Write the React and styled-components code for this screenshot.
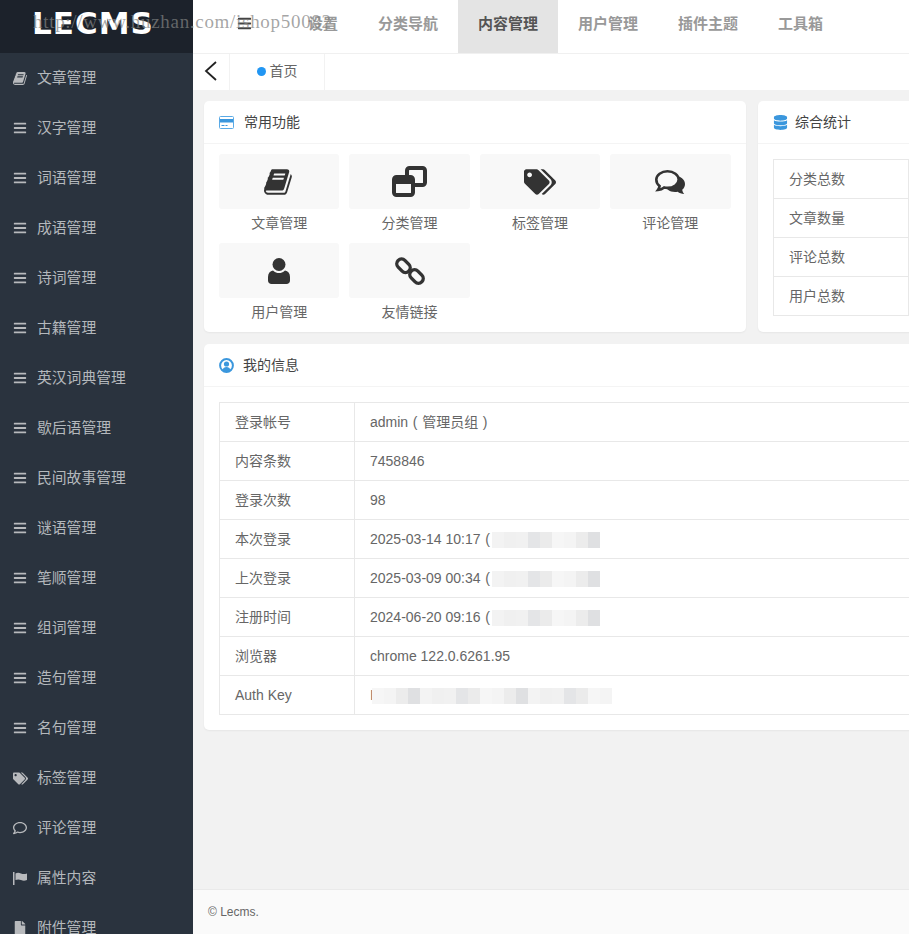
import React from 'react';
import styled, { createGlobalStyle } from 'styled-components';
import {
  FaBars, FaTags, FaRegComment, FaFile, FaDatabase,
} from 'react-icons/fa';

const GlobalStyle = createGlobalStyle`
  html, body { margin: 0; padding: 0; height: 100%; overflow: hidden; }
  body {
    background: #f2f2f2;
    color: #666;
    font-family: "Liberation Sans", "Noto Sans CJK SC", Arial, sans-serif;
    font-size: 14px;
    line-height: 20px;
  }
  #root { height: 100%; }
`;

const Page = styled.div`
  position: relative;
  display: flex;
  width: 909px;
  height: 934px;
  overflow: hidden;
`;
const Sidebar = styled.aside`
  flex: 0 0 193px;
  background: #2a333e;
  overflow: hidden;
`;
const LogoBar = styled.div`
  height: 53px;
  background: #1c222b;
  padding-left: 32px;
  display: flex;
  align-items: center;
`;
const Logo = styled.span`
  color: #fff;
  font-family: "DejaVu Sans", sans-serif;
  font-weight: 700;
  font-size: 31px;
  letter-spacing: 1px;
  line-height: 1;
  margin-top: -6px;
`;
const SideList = styled.ul`
  list-style: none;
  margin: 0;
  padding: 0;
`;
const SideItem = styled.li`
  height: 50px;
  display: flex;
  align-items: center;
  padding-left: 13px;
  color: #b4b8bc;
  font-size: 14.8px;
`;
const SideIcon = styled.span`
  width: 24px;
  display: flex;
  align-items: center;
  font-size: 14px;
  color: #b8babd;
`;
const Main = styled.main`
  flex: 1;
  min-width: 0;
  display: flex;
  flex-direction: column;
`;
const TopBar = styled.header`
  height: 53px;
  background: #fff;
  border-bottom: 1px solid #f0f0f0;
  display: flex;
  align-items: stretch;
  flex-shrink: 0;
`;
const MenuToggle = styled.div`
  width: 95px;
  padding: 0 0 6px 44px;
  box-sizing: border-box;
  display: flex;
  align-items: center;
  color: #444;
  font-size: 15px;
`;
const TopLink = styled.a`
  display: flex;
  align-items: center;
  padding: 0 20px 6px;
  font-size: 15px;
  font-weight: 700;
  color: ${p => (p.$active ? '#555' : '#999')};
  background: ${p => (p.$active ? '#e4e4e4' : 'transparent')};
`;
const TabBar = styled.div`
  height: 36px;
  background: #fff;
  display: flex;
  flex-shrink: 0;
`;
const BackButton = styled.div`
  width: 37px;
  padding-bottom: 2px;
  box-sizing: border-box;
  border-right: 1px solid #f2f2f2;
  display: flex;
  align-items: center;
  justify-content: center;
`;
const Tab = styled.div`
  width: 95px;
  padding-bottom: 2px;
  box-sizing: border-box;
  border-right: 1px solid #f2f2f2;
  display: flex;
  align-items: center;
  justify-content: center;
  gap: 4px;
  color: #666;
  font-size: 14px;
`;
const Dot = styled.i`
  width: 9px;
  height: 9px;
  border-radius: 50%;
  background: #2196f3;
`;
const Content = styled.div`
  flex: 1;
  padding: 11px 0 0 11px;
  overflow: hidden;
`;
const Row = styled.div`
  display: flex;
  gap: 12px;
  width: 900px;
  margin-bottom: 12px;
`;
const Card = styled.section`
  flex: 0 0 ${p => p.$width}px;
  width: ${p => p.$width}px;
  background: #fff;
  border-radius: 5px;
  box-shadow: 0 1px 2px rgba(0, 0, 0, 0.05);
`;
const CardHead = styled.div`
  height: 42px;
  border-bottom: 1px solid #f4f4f4;
  padding-left: 15px;
  display: flex;
  align-items: center;
  color: #444;
  font-size: 14px;
`;
const HeadIcon = styled.span`
  display: flex;
  align-items: center;
  width: ${p => p.$w}px;
  font-size: 15px;
  color: #3b97dd;
`;
const TileGrid = styled.div`
  display: grid;
  grid-template-columns: repeat(4, 120.4px);
  column-gap: 10px;
  padding: 10px 15px 0;
  height: 178px;
  align-content: start;
`;
const Tile = styled.div`
  height: 89px;
  text-align: center;
  color: #666;
  font-size: 14px;
`;
const TileIcon = styled.div`
  height: 55px;
  background: #f8f8f8;
  border-radius: 3px;
  display: flex;
  align-items: center;
  justify-content: center;
  color: #333;
  font-size: 30px;
  margin-bottom: 4px;
`;
const TableWrap = styled.div`
  padding: 15px 15px 15px;
`;
const Table = styled.table`
  border-collapse: collapse;
  width: ${p => p.$width}px;
  table-layout: fixed;
  border-left: 1px solid #e8e8e8;
`;
const Cell = styled.td`
  box-sizing: border-box;
  height: 39px;
  padding: 0 15px 1px;
  border: 1px solid #e8e8e8;
  border-left: none;
  color: #666;
  white-space: nowrap;
  overflow: hidden;
  width: ${p => (p.$width ? `${p.$width}px` : 'auto')};
`;
const Paren = styled.span`
  display: inline-block;
  width: 14px;
  text-align: center;
`;
const Mosaic = styled.span`
  display: inline-flex;
  vertical-align: middle;
  height: 16px;
  margin-left: ${p => p.$offset || 0}px;
  filter: blur(0.6px);
`;
const MosaicCell = styled.i`
  width: 12px;
  height: 100%;
  background: ${p => p.$tone};
`;
const Footer = styled.footer`
  height: 44px;
  flex-shrink: 0;
  background: #fafafa;
  border-top: 1px solid #eaeaea;
  padding-left: 15px;
  display: flex;
  align-items: center;
  font-size: 12px;
  color: #666;
`;
const Watermark = styled.div`
  position: absolute;
  left: 33px;
  top: 12px;
  font-family: "Liberation Serif", serif;
  font-size: 19px;
  letter-spacing: 0.7px;
  color: rgba(130, 130, 130, 0.72);
  white-space: nowrap;
  pointer-events: none;
`;

const BookIcon = ({ size = 30 }) => (
  <svg width={size} height={size} viewBox="0 0 1792 1792" fill="currentColor">
    <path d="M1639 478q40 57 18 129l-275 906q-19 64-76.5 107.5t-122.5 43.5h-923q-77 0-148.5-53.5t-99.5-131.5q-24-67-2-127 0-4 3-27t4-37q1-8-3-21.5t-3-19.5q2-11 8-21t16.5-23.5 16.5-23.5q23-38 45-91.5t30-91.5q3-10 .5-30t-.5-28q3-11 17-28t17-23q21-36 42-92t25-90q1-9-2.5-32t.5-28q4-13 22-30.5t22-22.5q19-26 42.5-84.5t27.5-96.5q1-8-3-25.5t-2-26.5q2-8 9-18t18-23 17-21q8-12 16.5-30.5t15-35 16-36 19.5-32 26.5-23.5 36-11.5 47.5 5.5l-1 3q38-9 51-9h761q74 0 114 56t18 130l-274 906q-36 119-71.5 153.5t-128.5 34.5h-869q-27 0-38 15-11 16-1 43 24 70 144 70h923q29 0 56-15.5t35-41.5l300-987q7-22 5-57 38 15 59 43zm-1064 2q-4 13 2 22.5t20 9.5h608q13 0 25.5-9.5t16.5-22.5l21-64q4-13-2-22.5t-20-9.5h-608q-13 0-25.5 9.5t-16.5 22.5zm-83 256q-4 13 2 22.5t20 9.5h608q13 0 25.5-9.5t16.5-22.5l21-64q4-13-2-22.5t-20-9.5h-608q-13 0-25.5 9.5t-16.5 22.5z" />
  </svg>
);

const CloneIcon = () => (
  <svg width="35" height="31" viewBox="0 0 35 31">
    <rect x="15" y="2" width="18" height="17" rx="2.5" fill="#f8f8f8" stroke="#333" strokeWidth="4" />
    <rect x="2" y="11" width="19" height="18" rx="2.5" fill="#f8f8f8" stroke="#333" strokeWidth="4" />
    <rect x="2" y="11" width="19" height="7" fill="#333" />
  </svg>
);

const UserIcon = () => (
  <svg width="22" height="26" viewBox="0 0 22 26" fill="#333">
    <circle cx="11" cy="6.5" r="6.5" />
    <path d="M5 12.5c2 2 4 2.6 6 2.6s4-.6 6-2.6c3 .5 5 2.6 5 6.500v3.500c0 2-1.500 3.500-3.500 3.500h-15C1.500 26 0 24.500 0 22.500V19c0-3.900 2-6 5-6.500z" />
  </svg>
);

const LinkIcon = () => (
  <svg width="30" height="30" viewBox="0 0 30 30" fill="none" stroke="#333" strokeWidth="3.4">
    <rect x="1" y="5" width="15" height="9.500" rx="4.700" transform="rotate(45 8.500 9.750)" />
    <rect x="14" y="15.750" width="15" height="9.500" rx="4.700" transform="rotate(45 21.500 20.500)" />
  </svg>
);

const CommentsIcon = () => (
  <svg width="30" height="24" viewBox="0 0 30 24">
    <path d="M20 6c5.500 0 10 3.300 10 8 0 2.400-1.100 4.400-2.800 5.800.2 1.500.9 3 2 4.200-2.600-.2-4.900-1-6.500-2.300-.9.200-1.700.3-2.700.3-5.500 0-10-3.300-10-8s4.500-8 10-8z" fill="#333" />
    <path d="M12.500 1.300C18.600 1.300 23.700 5 23.700 9.600s-5.100 8.300-11.200 8.300c-1.200 0-2.200-.1-3.300-.4-1.700 1.400-3.700 2.300-6.300 2.500.9-1.200 1.500-2.500 1.700-4C2.600 14.600 1.300 12.300 1.300 9.600 1.300 5 6.400 1.300 12.500 1.300z" fill="#f8f8f8" stroke="#333" strokeWidth="2.600" />
  </svg>
);

const TagsIcon = ({ size = 32 }) => <FaTags size={size} />;

const CardIcon = () => (
  <svg width="15" height="13" viewBox="0 0 15 13">
    <rect x="0.500" y="0.500" width="14" height="12" rx="1" fill="#fff" stroke="#5aaae6" />
    <rect x="1" y="3" width="13" height="3.500" fill="#3b97dd" />
    <rect x="2.500" y="9" width="3" height="1" fill="#3b97dd" />
    <rect x="6.500" y="9" width="2" height="1" fill="#3b97dd" />
  </svg>
);

const ProfileIcon = () => (
  <svg width="15" height="15" viewBox="0 0 15 15">
    <circle cx="7.500" cy="7.500" r="6.400" fill="#fff" stroke="#3b97dd" strokeWidth="2" />
    <circle cx="7.500" cy="6" r="2.600" fill="#3b97dd" />
    <path d="M3.400 12c.6-2 2.200-3 4.100-3s3.500 1 4.100 3c-1.100 1-2.500 1.500-4.100 1.500S4.500 13 3.400 12z" fill="#3b97dd" />
  </svg>
);

const FlagIcon = () => (
  <svg width="15" height="13" viewBox="0 0 15 13" fill="currentColor">
    <rect x="0" y="0" width="1.500" height="13" />
    <path d="M2.500 1.500c2-1 3.500-.8 5.500 0s3.500.8 6 0v6.500c-2.500 1-4 .8-6 0s-3.500-.8-5.500 0z" />
  </svg>
);

const Chevron = () => (
  <svg width="14" height="20" viewBox="0 0 14 20" fill="none" stroke="#222" strokeWidth="1.800">
    <polyline points="12,1 2,10 12,19" />
  </svg>
);

const bars = <FaBars />;
const sideItems = [
  ['文章管理', <BookIcon size={15} />],
  ['汉字管理', bars],
  ['词语管理', bars],
  ['成语管理', bars],
  ['诗词管理', bars],
  ['古籍管理', bars],
  ['英汉词典管理', bars],
  ['歇后语管理', bars],
  ['民间故事管理', bars],
  ['谜语管理', bars],
  ['笔顺管理', bars],
  ['组词管理', bars],
  ['造句管理', bars],
  ['名句管理', bars],
  ['标签管理', <TagsIcon size={15} />],
  ['评论管理', <FaRegComment />],
  ['属性内容', <FlagIcon />],
  ['附件管理', <FaFile />],
];

const topLinks = ['设置', '分类导航', '内容管理', '用户管理', '插件主题', '工具箱'];

const tiles = [
  ['文章管理', <BookIcon />],
  ['分类管理', <CloneIcon />],
  ['标签管理', <TagsIcon />],
  ['评论管理', <CommentsIcon />],
  ['用户管理', <UserIcon />],
  ['友情链接', <LinkIcon />],
];

const stats = ['分类总数', '文章数量', '评论总数', '用户总数'];

const lightTones = ['#f3f3f3', '#ececec', '#f6f6f6', '#e4e5e7', '#f0f0f0', '#dfe0e2', '#f4f4f4', '#ebebeb', '#f1f1f1'];

const Blur = ({ count, offset }) => (
  <Mosaic $offset={offset}>
    {Array.from({ length: count }, (_, i) => (
      <MosaicCell key={i} $tone={lightTones[(i * 4 + count) % lightTones.length]} />
    ))}
  </Mosaic>
);

const info = [
  ['登录帐号', <>admin<Paren>(</Paren>管理员组<Paren>)</Paren></>],
  ['内容条数', '7458846'],
  ['登录次数', '98'],
  ['本次登录', <>2025-03-14 10:17<Paren>(</Paren><Blur count={9} offset={-3} /></>],
  ['上次登录', <>2025-03-09 00:34<Paren>(</Paren><Blur count={9} offset={-3} /></>],
  ['注册时间', <>2024-06-20 09:16<Paren>(</Paren><Blur count={9} offset={-3} /></>],
  ['浏览器', 'chrome 122.0.6261.95'],
  ['Auth Key', <>I<Blur count={20} offset={-2} /></>],
];

export default function App() {
  return (
    <Page>
      <GlobalStyle />
      <Sidebar>
        <LogoBar><Logo>LECMS</Logo></LogoBar>
        <SideList>
          {sideItems.map(([label, icon]) => (
            <SideItem key={label}>
              <SideIcon>{icon}</SideIcon>
              {label}
            </SideItem>
          ))}
        </SideList>
      </Sidebar>
      <Main>
        <TopBar>
          <MenuToggle><FaBars /></MenuToggle>
          {topLinks.map(link => (
            <TopLink key={link} $active={link === '内容管理'}>{link}</TopLink>
          ))}
        </TopBar>
        <TabBar>
          <BackButton><Chevron /></BackButton>
          <Tab><Dot />首页</Tab>
        </TabBar>
        <Content>
          <Row>
            <Card $width={542}>
              <CardHead>
                <HeadIcon $w={25}><CardIcon /></HeadIcon>
                常用功能
              </CardHead>
              <TileGrid>
                {tiles.map(([label, icon]) => (
                  <Tile key={label}>
                    <TileIcon>{icon}</TileIcon>
                    {label}
                  </Tile>
                ))}
              </TileGrid>
            </Card>
            <Card $width={300}>
              <CardHead>
                <HeadIcon $w={22}><FaDatabase /></HeadIcon>
                综合统计
              </CardHead>
              <TableWrap>
                <Table $width={136}>
                  <tbody>
                    {stats.map(label => (
                      <tr key={label}><Cell>{label}</Cell></tr>
                    ))}
                  </tbody>
                </Table>
              </TableWrap>
            </Card>
          </Row>
          <Card $width={900}>
            <CardHead>
              <HeadIcon $w={24}><ProfileIcon /></HeadIcon>
              我的信息
            </CardHead>
            <TableWrap>
              <Table $width={860}>
                <tbody>
                  {info.map(([label, value]) => (
                    <tr key={label}>
                      <Cell $width={135}>{label}</Cell>
                      <Cell>{value}</Cell>
                    </tr>
                  ))}
                </tbody>
              </Table>
            </TableWrap>
          </Card>
        </Content>
        <Footer>© Lecms.</Footer>
      </Main>
      <Watermark>http://www.huzhan.com/ishop50082</Watermark>
    </Page>
  );
}
